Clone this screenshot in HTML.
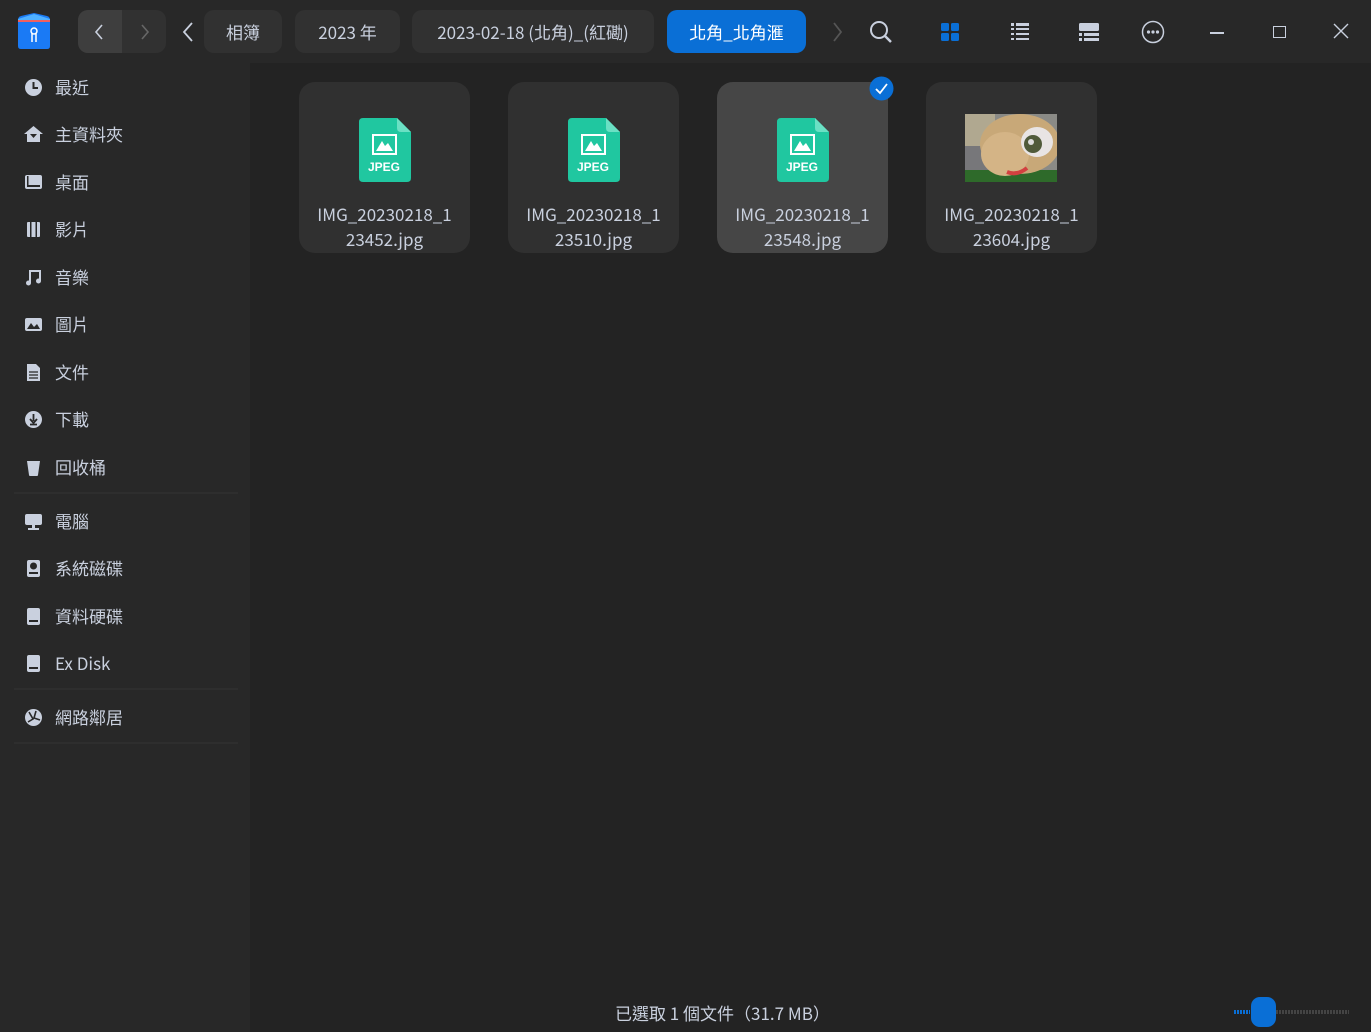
<!DOCTYPE html>
<html><head><meta charset="utf-8"><style>
*{margin:0;padding:0;box-sizing:border-box}
body{width:1371px;height:1032px;background:#232323;font-family:"Noto Sans CJK TC","Liberation Sans",sans-serif;color:#c9d0de;position:relative;overflow:hidden}
.top{position:absolute;left:0;top:0;width:1371px;height:63px;background:#282828}
.side{position:absolute;left:0;top:63px;width:250px;height:969px;background:#282828}
.btn{position:absolute;top:10px;height:43px;border-radius:10px;background:#313131;font-size:17px;line-height:43px;text-align:center;color:#c9d0de}
.item{position:absolute;left:24px;height:24px;font-size:17px;line-height:24px;display:flex;align-items:center}
.item .ic{width:19px;height:19px;margin-right:12px;display:flex;align-items:center;justify-content:center}
.sep{position:absolute;left:14px;width:224px;height:2px;background:#2e2e2e}
.card{position:absolute;top:82px;width:171px;height:171px;border-radius:16px;background:#303030;text-align:center;font-size:17px;line-height:25px;color:#c9d0de}
.card.sel{background:#464646}
.card .nm{position:absolute;left:0;right:0;top:119px}
.card svg{position:absolute;left:58px;top:34px}
</style></head><body>
<div class="top"></div>
<div class="side"></div>
<svg style="position:absolute;left:15px;top:12px" width="38" height="38" viewBox="0 0 38 38"><path d="M3 8 Q3 5 6 4 L19 1 L32 4 Q35 5 35 8 V34 Q35 37 32 37 H6 Q3 37 3 34Z" fill="#1a7af5"/><path d="M3 7 L19 2 L35 7 V10 H3Z" fill="#4fb0ff"/><rect x="3" y="8" width="32" height="2" fill="#f06060"/><circle cx="19" cy="19" r="3" fill="none" stroke="#fff" stroke-width="1.5"/><path d="M17 21 V30 M21 21 V30" stroke="#fff" stroke-width="1.5"/></svg>
<div style="position:absolute;left:78px;top:10px;width:88px;height:43px;border-radius:10px;background:#313131"></div>
<div style="position:absolute;left:78px;top:10px;width:44px;height:43px;border-radius:10px 0 0 10px;background:#3e3e3e"></div>
<svg style="position:absolute;left:92px;top:23px" width="14" height="18"><path d="M10 2 L4 9 L10 16" stroke="#c9d0de" stroke-width="1.6" fill="none"/></svg>
<svg style="position:absolute;left:138px;top:23px" width="14" height="18"><path d="M4 2 L10 9 L4 16" stroke="#666" stroke-width="1.6" fill="none"/></svg>
<svg style="position:absolute;left:180px;top:21px" width="16" height="22"><path d="M12 2 L4 11 L12 20" stroke="#c9d0de" stroke-width="1.8" fill="none"/></svg>
<div class="btn" style="left:204px;width:78px">相簿</div>
<div class="btn" style="left:295px;width:105px">2023 年</div>
<div class="btn" style="left:412px;width:242px">2023-02-18 (北角)_(紅磡)</div>
<div class="btn" style="left:667px;width:139px;background:#0a6fd6;color:#fff">北角_北角滙</div>
<svg style="position:absolute;left:830px;top:21px" width="16" height="22"><path d="M4 2 L11 11 L4 20" stroke="#555" stroke-width="1.8" fill="none"/></svg>
<svg style="position:absolute;left:868px;top:19px" width="26" height="26"><circle cx="11" cy="11" r="8" stroke="#c9d0de" stroke-width="2" fill="none"/><path d="M17 17 L23 23" stroke="#c9d0de" stroke-width="2.4"/></svg>
<svg style="position:absolute;left:940px;top:22px" width="20" height="20"><rect x="1" y="1" width="8" height="8" rx="1.5" fill="#0a6fd6"/><rect x="11" y="1" width="8" height="8" rx="1.5" fill="#0a6fd6"/><rect x="1" y="11" width="8" height="8" rx="1.5" fill="#0a6fd6"/><rect x="11" y="11" width="8" height="8" rx="1.5" fill="#0a6fd6"/></svg>
<svg style="position:absolute;left:1010px;top:22px" width="20" height="20" fill="#c9d0de"><rect x="1" y="1" width="3" height="3"/><rect x="6" y="1" width="13" height="3"/><rect x="1" y="6" width="3" height="2"/><rect x="6" y="6" width="13" height="2"/><rect x="1" y="11" width="3" height="2"/><rect x="6" y="11" width="13" height="2"/><rect x="1" y="16" width="3" height="2"/><rect x="6" y="16" width="13" height="2"/></svg>
<svg style="position:absolute;left:1078px;top:22px" width="22" height="20" fill="#c9d0de"><rect x="1" y="1" width="20" height="8" rx="1.5"/><rect x="1" y="11" width="3" height="3"/><rect x="6" y="11" width="15" height="3"/><rect x="1" y="16" width="3" height="3"/><rect x="6" y="16" width="15" height="3"/></svg>
<svg style="position:absolute;left:1141px;top:20px" width="24" height="24"><circle cx="12" cy="12" r="10.5" stroke="#c9d0de" stroke-width="1.5" fill="none"/><circle cx="7.5" cy="12" r="1.6" fill="#c9d0de"/><circle cx="12" cy="12" r="1.6" fill="#c9d0de"/><circle cx="16.5" cy="12" r="1.6" fill="#c9d0de"/></svg>
<div style="position:absolute;left:1210px;top:32px;width:14px;height:1.5px;background:#c9d0de"></div>
<div style="position:absolute;left:1273px;top:26px;width:13px;height:12px;border:1.5px solid #c9d0de"></div>
<svg style="position:absolute;left:1333px;top:23px" width="16" height="16"><path d="M1 1 L15 15 M15 1 L1 15" stroke="#c9d0de" stroke-width="1.4"/></svg>

<div class="item" style="top:75px"><span class="ic"><svg width="19" height="19"><circle cx="9.5" cy="9.5" r="8.5" fill="#c9d0de"/><path d="M9.5 4 V10 H14" stroke="#282828" stroke-width="2" fill="none"/></svg></span>最近</div>
<div class="item" style="top:122px"><span class="ic"><svg width="19" height="19"><path d="M9.5 1 L19 9 H16 V17 H3 V9 H0Z" fill="#c9d0de"/><path d="M6 9 H13 L9.5 13Z" fill="#282828"/></svg></span>主資料夾</div>
<div class="item" style="top:170px"><span class="ic"><svg width="19" height="19"><rect x="1" y="2" width="17" height="14" rx="2" fill="#c9d0de"/><rect x="3" y="12" width="13" height="2" fill="#282828"/><rect x="3" y="3" width="1.5" height="9" fill="#282828"/></svg></span>桌面</div>
<div class="item" style="top:217px"><span class="ic"><svg width="19" height="19"><rect x="3" y="2" width="13" height="15" rx="1" fill="#c9d0de"/><rect x="6" y="2" width="1.5" height="15" fill="#282828"/><rect x="11.5" y="2" width="1.5" height="15" fill="#282828"/></svg></span>影片</div>
<div class="item" style="top:265px"><span class="ic"><svg width="19" height="19"><path d="M6 15 V3 H16 V13" stroke="#c9d0de" stroke-width="2" fill="none"/><circle cx="4.5" cy="15" r="2.5" fill="#c9d0de"/><circle cx="14.5" cy="13" r="2.5" fill="#c9d0de"/></svg></span>音樂</div>
<div class="item" style="top:312px"><span class="ic"><svg width="19" height="19"><rect x="1" y="3" width="17" height="13" rx="2" fill="#c9d0de"/><path d="M3 14 L7 8 L10 12 L13 9 L16 14Z" fill="#282828"/></svg></span>圖片</div>
<div class="item" style="top:360px"><span class="ic"><svg width="19" height="19"><path d="M3 1 H12 L16 5 V18 H3Z" fill="#c9d0de"/><path d="M5 9 H14 M5 12 H14 M5 15 H14" stroke="#282828" stroke-width="1.2"/></svg></span>文件</div>
<div class="item" style="top:407px"><span class="ic"><svg width="19" height="19"><circle cx="9.5" cy="9.5" r="8.5" fill="#c9d0de"/><path d="M9.5 4 V11 M6 9 L9.5 13 L13 9 M6 14.5 H13" stroke="#282828" stroke-width="1.8" fill="none"/></svg></span>下載</div>
<div class="item" style="top:455px"><span class="ic"><svg width="19" height="19"><path d="M3 3 H16 L14 17 Q14 18 13 18 H6 Q5 18 5 17Z" fill="#c9d0de"/></svg></span>回收桶</div>
<div class="sep" style="top:492px"></div>
<div class="item" style="top:509px"><span class="ic"><svg width="19" height="19"><rect x="1" y="2" width="17" height="11" rx="2" fill="#c9d0de"/><rect x="8" y="13" width="3" height="3" fill="#c9d0de"/><rect x="4" y="16" width="11" height="2" fill="#c9d0de"/></svg></span>電腦</div>
<div class="item" style="top:556px"><span class="ic"><svg width="19" height="19"><rect x="3" y="1" width="13" height="17" rx="2" fill="#c9d0de"/><circle cx="9.5" cy="7" r="3.5" fill="#282828"/><rect x="5" y="13" width="9" height="2" fill="#282828"/></svg></span>系統磁碟</div>
<div class="item" style="top:604px"><span class="ic"><svg width="19" height="19"><rect x="3" y="1" width="13" height="17" rx="2" fill="#c9d0de"/><rect x="5" y="13" width="9" height="2" fill="#282828"/></svg></span>資料硬碟</div>
<div class="item" style="top:651px"><span class="ic"><svg width="19" height="19"><rect x="3" y="1" width="13" height="17" rx="2" fill="#c9d0de"/><rect x="5" y="13" width="9" height="2" fill="#282828"/></svg></span>Ex Disk</div>
<div class="sep" style="top:688px"></div>
<div class="item" style="top:705px"><span class="ic"><svg width="19" height="19"><circle cx="9.5" cy="9.5" r="8.5" fill="#c9d0de"/><path d="M5 4 L9 11 L4 14 M12 3 L10 10 L16 12" stroke="#282828" stroke-width="1.6" fill="none"/></svg></span>網路鄰居</div>
<div class="sep" style="top:742px"></div>

<div class="card" style="left:299px"><svg width="56" height="68"><path d="M6 2 H40 L54 16 V62 Q54 66 50 66 H6 Q2 66 2 62 V6 Q2 2 6 2Z" fill="#20c7a0"/><path d="M40 2 L54 16 H44 Q40 16 40 12Z" fill="#6be0c4"/><rect x="16" y="19" width="23" height="19" fill="none" stroke="#fff" stroke-width="2"/><path d="M19 35 L25 25 L28 30 L31 27 L36 35Z" fill="#fff"/><text x="27" y="55" font-size="12" font-weight="bold" fill="#fff" text-anchor="middle" font-family="Liberation Sans">JPEG</text></svg><div class="nm">IMG_20230218_1<br>23452.jpg</div></div>
<div class="card" style="left:508px"><svg width="56" height="68"><path d="M6 2 H40 L54 16 V62 Q54 66 50 66 H6 Q2 66 2 62 V6 Q2 2 6 2Z" fill="#20c7a0"/><path d="M40 2 L54 16 H44 Q40 16 40 12Z" fill="#6be0c4"/><rect x="16" y="19" width="23" height="19" fill="none" stroke="#fff" stroke-width="2"/><path d="M19 35 L25 25 L28 30 L31 27 L36 35Z" fill="#fff"/><text x="27" y="55" font-size="12" font-weight="bold" fill="#fff" text-anchor="middle" font-family="Liberation Sans">JPEG</text></svg><div class="nm">IMG_20230218_1<br>23510.jpg</div></div>
<div class="card sel" style="left:717px"><svg width="56" height="68"><path d="M6 2 H40 L54 16 V62 Q54 66 50 66 H6 Q2 66 2 62 V6 Q2 2 6 2Z" fill="#20c7a0"/><path d="M40 2 L54 16 H44 Q40 16 40 12Z" fill="#6be0c4"/><rect x="16" y="19" width="23" height="19" fill="none" stroke="#fff" stroke-width="2"/><path d="M19 35 L25 25 L28 30 L31 27 L36 35Z" fill="#fff"/><text x="27" y="55" font-size="12" font-weight="bold" fill="#fff" text-anchor="middle" font-family="Liberation Sans">JPEG</text></svg><div class="nm">IMG_20230218_1<br>23548.jpg</div></div>
<svg style="position:absolute;left:869px;top:76px" width="25" height="25"><circle cx="12.5" cy="12.5" r="12" fill="#0a6fd6"/><path d="M7 13 L11 17 L18 8" stroke="#fff" stroke-width="1.8" fill="none"/></svg>
<div class="card" style="left:926px"><div class="nm">IMG_20230218_1<br>23604.jpg</div>
<svg style="position:absolute;left:39px;top:32px" width="92" height="68"><rect width="92" height="68" fill="#8a8a86"/><rect x="0" y="0" width="30" height="32" fill="#b0a890"/><rect x="0" y="32" width="30" height="36" fill="#77777a"/><rect x="0" y="56" width="92" height="12" fill="#2e6a2a"/><ellipse cx="55" cy="30" rx="40" ry="30" fill="#c8a878"/><ellipse cx="40" cy="40" rx="24" ry="22" fill="#d4b486"/><ellipse cx="72" cy="28" rx="16" ry="15" fill="#e8e4e4"/><circle cx="68" cy="30" r="9" fill="#505a3a"/><circle cx="66" cy="28" r="3" fill="#ddd"/><path d="M42 58 Q52 62 62 54" stroke="#d24040" stroke-width="4" fill="none"/></svg></div>

<div style="position:absolute;left:615px;top:1000px;width:240px;white-space:nowrap;font-size:17px;line-height:26px;color:#c9d0de">已選取 1 個文件（31.7 MB）</div>
<div style="position:absolute;left:1234px;top:1010px;width:16px;height:4px;background:repeating-linear-gradient(90deg,#0a6fd6 0 2px,transparent 2px 3px)"></div>
<div style="position:absolute;left:1276px;top:1010px;width:73px;height:4px;background:repeating-linear-gradient(90deg,#444 0 2px,transparent 2px 3px)"></div>
<div style="position:absolute;left:1251px;top:997px;width:25px;height:30px;border-radius:9px;background:#0a6fd6"></div>
</body></html>
